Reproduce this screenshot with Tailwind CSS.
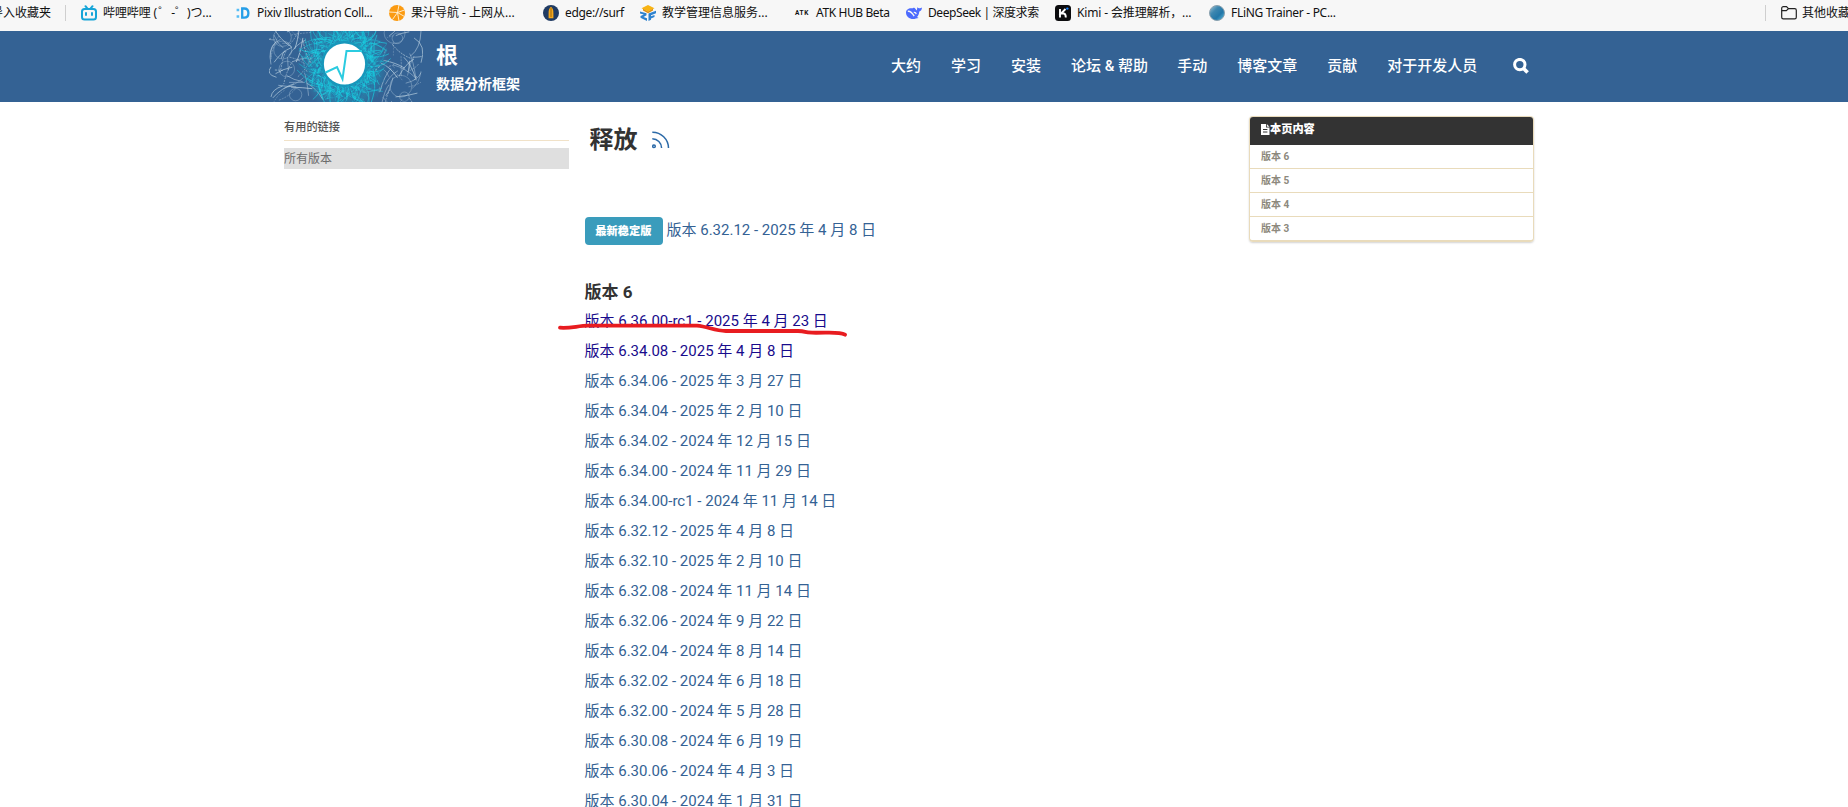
<!DOCTYPE html>
<html lang="zh-CN">
<head>
<meta charset="utf-8">
<title>释放 - 根</title>
<script src="https://cdn.jsdelivr.net/npm/@tailwindcss/browser@4"></script>
</head>
<body class="relative h-[807px] w-[1848px] overflow-hidden bg-white font-[Roboto,'Noto_Sans_CJK_SC',sans-serif]">

<!-- Bookmarks bar -->
<nav class="flex h-[31px] items-start overflow-hidden whitespace-nowrap bg-[#f7f7f7] pt-[3px] font-['Noto_Sans','Noto_Sans_CJK_SC',sans-serif] text-[12px] leading-5 text-[#111]">
  <span class="-ml-[9px] w-[74px] shrink-0">导入收藏夹</span>
  <span class="mt-[2px] mr-[15px] h-4 w-px shrink-0 bg-[#cfcfcf]"></span>
  <div class="flex w-[154px] shrink-0 items-center gap-1.5">
    <svg class="size-4 shrink-0" viewBox="0 0 16 16" fill="none" stroke="#16a5d8" stroke-width="2" stroke-linecap="round"><rect x="1" y="4" width="14" height="10.5" rx="2.5"/><path d="M4.5 1.2 6.3 3.3M11.5 1.2 9.7 3.3M5 8v2M11 8v2"/></svg>
    <span class="tracking-[-0.1px]">哔哩哔哩 (<span class="inline-block w-[14px] text-center">゜</span>-<span class="inline-block w-[12px] text-center">゜</span>)つ...</span>
  </div>
  <div class="flex w-[154px] shrink-0 items-center gap-1.5">
    <svg class="size-4 shrink-0" viewBox="0 0 16 16" fill="none" stroke="#259ee8" stroke-width="2.300"><path d="M7.200 3.500h1.900c3 0 4.300 1.800 4.300 4.500s-1.300 4.700-4.300 4.700H7.200z"/><path d="M1.600 5h2.600M1.600 11.500h2.600" stroke="#55bdf5" stroke-width="2.600"/></svg>
    <span class="tracking-[-0.340px]">Pixiv Illustration Coll...</span>
  </div>
  <div class="flex w-[154px] shrink-0 items-center gap-1.5">
    <svg class="size-4 shrink-0" viewBox="0 0 16 16"><circle cx="8" cy="8" r="8" fill="#fb9b12"/><path d="M8.500 7.500 10 0M8.500 7.500l7-2.500M8.500 7.500l7 4M8.500 7.500l1.500 8.500M8.500 7.500l-5 7M8.500 7.500 0 7" stroke="#fff3da" stroke-width=".9"/></svg>
    <span>果汁导航 - 上网从...</span>
  </div>
  <div class="flex w-[97px] shrink-0 items-center gap-1.5">
    <svg class="size-4 shrink-0" viewBox="0 0 16 16"><circle cx="8" cy="8" r="8" fill="#203b63"/><path d="M8 1.8c1.900 1.700 2.400 3.200 2.400 6.200v5.200H5.600V8C5.600 5 6.100 3.500 8 1.800z" fill="#f6a81c"/><path d="M8 3v9" stroke="#8c5a10" stroke-width=".8"/></svg>
    <span class="tracking-[-0.350px]">edge://surf</span>
  </div>
  <div class="flex w-[154px] shrink-0 items-center gap-1.5">
    <svg class="size-4 shrink-0" viewBox="0 0 16 16"><path d="M8 0 14.500 3.200 8 6.600 1.500 3.200z" fill="#f8b414"/><path d="M3 3.800 8 6.400l5-2.600v1.600L8 8.200 3 5.600z" fill="#dd8f12"/><path d="M0 6.500l6.500 1.800v2L3.500 12l3.500 1.200V16L.5 12.800v-1.700L3.800 9.500 0 8.600zM8.500 8.600 16 5.800v2.500l-5 2v1l3.500-1.300v2L11 13.400v1.400L8.500 16z" fill="#2d82cf"/></svg>
    <span>教学管理信息服务...</span>
  </div>
  <div class="flex w-[112px] shrink-0 items-center gap-1.5">
    <span class="w-4 shrink-0 text-center font-[Roboto] text-[6.500px] font-bold tracking-[0.6px]">ATK</span>
    <span class="tracking-[-0.400px]">ATK HUB Beta</span>
  </div>
  <div class="flex w-[149px] shrink-0 items-center gap-1.5">
    <svg class="size-4 shrink-0" viewBox="0 0 16 16"><path d="M0 7.500C0 4.500 3 2.800 6 3.300c1 .1 1.300-.7 2.200-.5 1.200.7 1.600 2 2.600 2.600.5-1 .2-2 .6-3.100.8.9 1.500 1.100 2.400.9.900-.2 1.500-.2 2.200-.6-.1 2.300-1.200 3.600-2.700 3.800-.2 3-1.400 4.600-2.300 5.500l1.600 1-2.700.5C5.500 15.300 0 12.500 0 7.500z" fill="#4d6bfe"/><path d="M1.800 6.300c2.700-.5 4.900 2.400 6.400 4.900M7.800 7.400c1.300-.2 2.200.6 2.400 1.800" stroke="#f7f7f7" stroke-width="1.300" fill="none"/></svg>
    <span class="tracking-[-0.420px]">DeepSeek | 深度求索</span>
  </div>
  <div class="flex w-[154px] shrink-0 items-center gap-1.5">
    <svg class="size-4 shrink-0" viewBox="0 0 16 16"><rect width="16" height="16" rx="3.500" fill="#0c0c0e"/><path d="M5 4v8.500M10.500 4 6 8.500h2.500c1.800 0 2.300 1 2.300 4" stroke="#fff" stroke-width="1.900" fill="none"/><circle cx="12.300" cy="3.600" r="1.200" fill="#1783ff"/></svg>
    <span class="tracking-[-0.140px]">Kimi - 会推理解析，...</span>
  </div>
  <div class="flex shrink-0 items-center gap-1.5">
    <svg class="size-4 shrink-0" viewBox="0 0 16 16"><defs><linearGradient id="globe" x1="0" y1="0" x2="1" y2="1"><stop offset="0" stop-color="#a9c9d8"/><stop offset=".35" stop-color="#3d87b0"/><stop offset=".65" stop-color="#2277a8"/><stop offset="1" stop-color="#62c2e2"/></linearGradient></defs><circle cx="8" cy="8" r="7.500" fill="url(#globe)" stroke="#8ba1ae"/></svg>
    <span class="tracking-[-0.300px]">FLiNG Trainer - PC...</span>
  </div>
  <div class="ml-auto flex w-[83px] shrink-0">
    <span class="mt-[2px] mr-[15px] h-4 w-px shrink-0 bg-[#cfcfcf]"></span>
    <svg class="mt-[2px] mr-[5px] size-4 shrink-0" viewBox="0 0 16 16" fill="none" stroke="#222" stroke-width="1.200"><path d="M.7 3.200a1.600 1.600 0 0 1 1.600-1.600h3.200L7.500 3.600h6.200a1.600 1.600 0 0 1 1.600 1.600v7a1.600 1.600 0 0 1-1.600 1.600H2.300a1.600 1.600 0 0 1-1.600-1.600z"/><path d="M.7 5.600h4.600l2.200-2"/></svg>
    <span>其他收藏夹</span>
  </div>
</nav>

<!-- Site header -->
<header class="flex h-[71px] bg-[#346294] pl-[269px] text-white">
  <svg class="h-[71px] w-[154px] shrink-0" viewBox="0 0 154 71">
    <defs><radialGradient id="glow"><stop offset=".4" stop-color="#17b6d0" stop-opacity=".75"/><stop offset="1" stop-color="#17b6d0" stop-opacity="0"/></radialGradient></defs>
    <ellipse cx="75.500" cy="34" rx="44" ry="48" fill="url(#glow)"/>
    <g id="tracks" fill="none"></g>
    <circle cx="75.500" cy="33" r="22" fill="none" stroke="#1797bb" stroke-width="2"/>
    <circle cx="75.500" cy="33" r="20.600" fill="#fff"/>
    <path d="M56.500 41.500 68 36l5.500 12 4-28H93" fill="none" stroke="#2bcbe0" stroke-width="2"/>
  </svg>
  <div class="ml-[13px] w-[455px] font-bold">
    <div class="mt-[10px] text-[22px] leading-[30px]">根</div>
    <div class="mt-[3px] text-[14px] leading-5">数据分析框架</div>
  </div>
  <nav class="flex items-center gap-[30px] whitespace-nowrap pb-[2px] text-[15px] font-medium">
    <a class="pt-px">大约</a><a class="pt-px">学习</a><a class="pt-px">安装</a><a class="-mr-px pt-px">论坛 &amp; 帮助</a><a class="pt-px">手动</a><a class="pt-px">博客文章</a><a class="pt-px">贡献</a><a class="pt-px">对于开发人员</a>
    <svg class="ml-[6px] size-4" viewBox="0 0 16 16" fill="none" stroke="#fff"><circle cx="6.800" cy="6.600" r="5.200" stroke-width="3"/><path d="m10.600 10.600 4 4" stroke-width="3.600"/></svg>
  </nav>
</header>

<!-- Page body -->
<main class="flex items-start pl-[284px]">
  <aside class="w-[285px] pt-[18px]">
    <h2 class="h-[21px] border-b border-[#f1e2c8] text-[11.200px] leading-4 font-medium text-[#555]">有用的链接</h2>
    <div class="mt-[7px] h-[21px] bg-[#dfdfdf] text-[12px] leading-[23px] text-[#6c6c6c]">所有版本</div>
  </aside>

  <section class="relative ml-[15.500px] w-[664.500px] text-[15px] text-[#346294]">
    <div class="flex items-center pt-[21px] pl-[5px]">
      <h1 class="text-[24px] leading-[34px] font-bold text-[#333]">释放</h1>
      <svg class="ml-[14px] size-[18px]" viewBox="0 0 18 18" fill="none" stroke="#2c6aa8" stroke-width="1.500"><circle cx="2" cy="15.300" r="1.300"/><path d="M.3 7.700a9.300 9.300 0 0 1 9.300 9.300M.3 1.200A16 16 0 0 1 16.500 17"/></svg>
    </div>
    <div class="mt-[60px] flex h-7 items-center">
      <span class="h-7 w-[78px] rounded bg-[#3a9cbc] text-center text-[11.250px] leading-[29px] font-black text-white">最新稳定版</span>
      <a class="ml-1 pb-px">版本 6.32.12 - 2025 年 4 月 8 日</a>
    </div>
    <h2 class="mt-[34px] text-[17px] leading-[26px] font-bold text-[#333]">版本 6</h2>
    <ul class="mt-px whitespace-nowrap leading-[30px]">
      <li class="text-[#180b8c]">版本 6.36.00-rc1 - 2025 年 4 月 23 日</li>
      <li class="text-[#180b8c]">版本 6.34.08 - 2025 年 4 月 8 日</li>
      <li>版本 6.34.06 - 2025 年 3 月 27 日</li>
      <li>版本 6.34.04 - 2025 年 2 月 10 日</li>
      <li>版本 6.34.02 - 2024 年 12 月 15 日</li>
      <li>版本 6.34.00 - 2024 年 11 月 29 日</li>
      <li>版本 6.34.00-rc1 - 2024 年 11 月 14 日</li>
      <li>版本 6.32.12 - 2025 年 4 月 8 日</li>
      <li>版本 6.32.10 - 2025 年 2 月 10 日</li>
      <li>版本 6.32.08 - 2024 年 11 月 14 日</li>
      <li>版本 6.32.06 - 2024 年 9 月 22 日</li>
      <li>版本 6.32.04 - 2024 年 8 月 14 日</li>
      <li>版本 6.32.02 - 2024 年 6 月 18 日</li>
      <li>版本 6.32.00 - 2024 年 5 月 28 日</li>
      <li>版本 6.30.08 - 2024 年 6 月 19 日</li>
      <li>版本 6.30.06 - 2024 年 4 月 3 日</li>
      <li>版本 6.30.04 - 2024 年 1 月 31 日</li>
    </ul>
    <!-- Hand-drawn marker stroke over the release candidate -->
    <svg class="absolute top-[216px] -left-[29px] h-[26px] w-[300px]" viewBox="0 0 300 26" fill="none" stroke="#e81c20" stroke-width="3.800" stroke-linecap="round" stroke-linejoin="round"><path d="M4 9.700c10 1 19-2.200 29-2h108c11 1 17 4.800 29 5.300h72c9 .3 5 1.400 14 1.700 15 .4 27-1.600 33 2"/></svg>
  </section>

  <aside class="mt-[14px] w-[285px] overflow-hidden rounded-[4px] border border-[#e9dbbb] border-b-2 text-[10px] font-bold text-[#8d897d] shadow-[0_1px_2px_rgba(0,0,0,0.18)]">
    <div class="flex h-7 items-center bg-[#333] pb-0.5 pl-[11px] text-[11.200px] font-black text-white">
      <svg class="mb-px h-[11px] w-[9px]" viewBox="0 0 9 11"><path d="M0 0h5v3.500H8.500V11H0z" fill="#fff"/><path d="M5.800 0 8.500 2.700H5.800z" fill="#fff"/><path d="M2 5.500h4.400M2 8h4.400" stroke="#333"/></svg><span class="pt-px">本页内容</span>
    </div>
    <div class="h-6 border-b border-[#e9dbbb] pl-[11px] leading-[23px]">版本 6</div>
    <div class="h-6 border-b border-[#e9dbbb] pl-[11px] leading-[23px]">版本 5</div>
    <div class="h-6 border-b border-[#e9dbbb] pl-[11px] leading-[23px]">版本 4</div>
    <div class="h-[23px] pl-[11px] leading-[23px]">版本 3</div>
  </aside>
</main>

<script>
  // Particle tracks around the logo disc; fixed seed keeps the drawing stable.
  let seed = 11;
  const rnd = () => (seed = (seed * 16807) % 2147483647) / 2147483647;
  const f = n => n.toFixed(1);
  let out = '';
  for (let i = 0; i < 80; i++) {
    const side = i % 2 ? 1 : -1;
    const x = 76 + side * (34 + rnd() * 38), y = rnd() * 71;
    const dx = (rnd() - .5) * 44, dy = (rnd() - .5) * 50;
    const ex = Math.max(2, Math.min(152, x + dx));
    out += `<path d="M${f(x)} ${f(y)}Q${f(x + dx * .6)} ${f(y + dy * .3)} ${f(ex)} ${f(y + dy)}" stroke="#c4d8e6" stroke-width=".9" stroke-dasharray="${i % 3 ? 'none' : '2 1'}" opacity="${f(.3 + rnd() * .5)}"/>`;
  }
  for (let i = 0; i < 8; i++) {
    const side = i % 2 ? 1 : -1;
    out += `<circle cx="${f(76 + side * (45 + rnd() * 18))}" cy="${f(rnd() * 71)}" r="${f(4 + rnd() * 9)}" stroke="#b9d0e2" stroke-width=".7" opacity=".5"/>`;
  }
  for (let i = 0; i < 330; i++) {
    const a = rnd() * 6.283, r = 28 + rnd() * 20, b = a + (rnd() - .5) * 1.1;
    const p = (t, q) => f(75.5 + Math.cos(t) * q) + ' ' + f(33 + Math.sin(t) * q);
    out += `<path d="M${p(a, 20 + rnd() * 12)}Q${p(b, r * .8)} ${p(a + (rnd() - .5) * .9, r)}" stroke="${['#16c8dc', '#1fd3e4', '#2a6fa3'][i % 3]}" stroke-width=".9" opacity="${f(.4 + rnd() * .4)}"/>`;
  }
  document.getElementById('tracks').innerHTML = out;
</script>
</body>
</html>
